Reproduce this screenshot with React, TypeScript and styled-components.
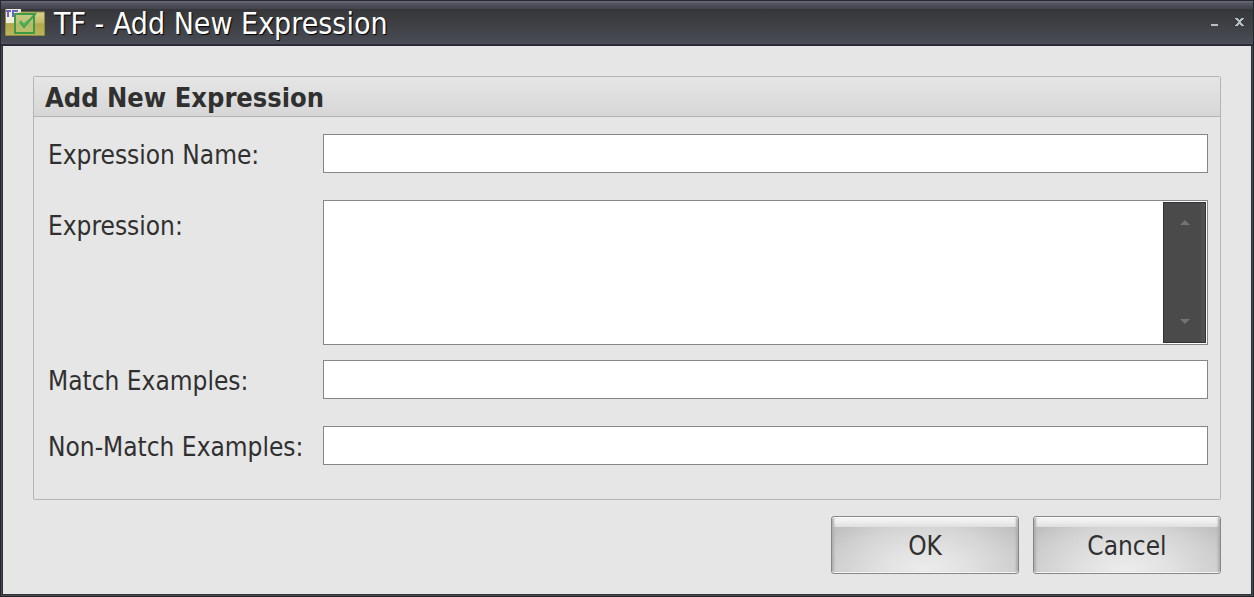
import React from "react";
import styled, { createGlobalStyle, css } from "styled-components";

const GlobalStyle = createGlobalStyle`
  *, *::before, *::after { box-sizing: border-box; }
  body {
    margin: 0;
    background: #e6e6e6;
    color: #303030;
    font: 26px/32px "DejaVu Sans Condensed", "Noto Sans", sans-serif;
  }
  button, input, textarea { font: inherit; color: inherit; }
`;

const Window = styled.div`
  display: flex;
  flex-direction: column;
  min-height: 100vh;
  border: 1px solid #24282d;
`;

const TitleBar = styled.header`
  display: flex;
  align-items: center;
  height: 45px;
  padding: 0 1px 0 4px;
  color: #fff;
  border-bottom: 2px solid #2b2b35;
  background: linear-gradient(#6b6c78 0, #50515d 3px, #42434d 8px, #36373a 8px, #3e4045 24px, #4a4c56 42px, #565867 43px);
`;

const AppIcon = styled.svg`
  display: block;
  flex: none;
`;

const Title = styled.h1`
  flex: 1;
  margin: 0 0 0 9px;
  padding-top: 2px;
  font-size: 30px;
  line-height: 40px;
  font-weight: 400;
  text-shadow: 1px 1px 1px #000;
`;

const WindowButton = styled.button`
  display: grid;
  place-items: center;
  width: 25px;
  height: 25px;
  padding: 0;
  border: 0;
  background: none;
  color: #b3c0c8;
`;

const Frame = styled.div`
  flex: 1;
  display: flex;
  flex-direction: column;
  border: solid #45484c;
  border-width: 0 1px 1px;
`;

const Content = styled.form`
  flex: 1;
  padding: 30px;
  padding-bottom: 20px;
  border: solid #303338;
  border-width: 0 1px 1px;
  background: #e6e6e6;
`;

const Group = styled.section`
  border: 1px solid #b5b5b5;
  border-radius: 2px;
`;

const GroupTitle = styled.h2`
  margin: 0;
  height: 40px;
  padding: 0 11px;
  font-size: 27px;
  line-height: 42px;
  font-weight: 700;
  border-bottom: 1px solid #b5b5b5;
  background: linear-gradient(#e6e6e6, #d6d6d6);
`;

const Fields = styled.div`
  padding: 17px 12px 34px 14px;
`;

const Row = styled.div<{ $gap?: number }>`
  display: grid;
  grid-template-columns: 275px 1fr;
  align-items: start;
  margin-bottom: ${(p) => p.$gap ?? 0}px;
`;

const Label = styled.label<{ $top?: number }>`
  padding-top: ${(p) => p.$top ?? 5}px;
  white-space: nowrap;
`;

const box = css`
  border: 1px solid #868686;
  background: #fff;
`;

const TextBox = styled.input`
  ${box}
  width: 100%;
  height: 39px;
  padding: 0 6px;
  border-radius: 0;
`;

const ScrollBox = styled.div`
  ${box}
  display: flex;
  height: 145px;
  padding: 1px;
`;

const TextArea = styled.textarea`
  flex: 1;
  min-width: 0;
  padding: 2px 6px;
  border: 0;
  resize: none;
  overflow: hidden;
  background: none;
`;

const ScrollBar = styled.div`
  display: flex;
  flex-direction: column;
  justify-content: space-between;
  width: 43px;
  border: 1px solid #323236;
  background: linear-gradient(90deg, #4a4a4a 85%, #545454);
`;

const ScrollButton = styled.button`
  display: grid;
  place-items: center;
  height: 40px;
  padding: 0;
  border: 0;
  background: none;
`;

const Actions = styled.footer`
  display: flex;
  justify-content: flex-end;
  gap: 14px;
  margin-top: 16px;
`;

const ActionButton = styled.button`
  width: 188px;
  height: 58px;
  padding: 2px 0 0;
  border: 1px solid #858585;
  border-radius: 3px;
  box-shadow: inset 0 1px #fff, inset 0 -1px #f8f8f8, inset 2px 0 2px #b0b0b0, inset -2px 0 2px #b0b0b0;
  background:
    linear-gradient(#fafafa, #dfdfdf) 0 0 / 100% 10px no-repeat,
    radial-gradient(ellipse 64% 130% at 50% 100%, #ededed 0, #e2e2e3 35%, #d4d4d5 65%, rgba(196, 196, 197, 0) 100%),
    linear-gradient(#b9b9ba, #c9c9ca);
`;

function FolderIcon() {
  return (
    <AppIcon width="40" height="27" viewBox="0 0 40 27" aria-hidden="true">
      <defs>
        <linearGradient id="folder" x2="0" y2="1">
          <stop offset="0" stopColor="#ddd698" />
          <stop offset=".5" stopColor="#c4bc66" />
          <stop offset=".55" stopColor="#b0a84a" />
          <stop offset="1" stopColor="#bdb55b" />
        </linearGradient>
      </defs>
      <path d="M.5 .5h15v2.500h24v23.500H.5z" fill="url(#folder)" stroke="#8f8a45" />
      <path d="M1 0h15v3h-2l-5 2v9H1z" fill="#f3f2ea" opacity=".9" />
      <path d="M1 2h5M3 2v6M8 8V2h5M8 5h4" fill="none" stroke="#6a65c0" strokeWidth="2" />
      <rect x="10" y="5" width="19" height="19" fill="#b7c67c" fillOpacity=".6" stroke="#3f9a45" strokeWidth="2" />
      <path d="M15 13l4 5L31 4" fill="none" stroke="#3f9f4c" strokeWidth="2" />
      <path d="M15 12l4 4 5-5" fill="none" stroke="#4fae58" strokeWidth="2" />
    </AppIcon>
  );
}

function Arrow({ down }: { down?: boolean }) {
  return (
    <svg width="10" height="6" viewBox="0 0 10 6" aria-hidden="true">
      <path d={down ? "M0 0h10L5 5z" : "M0 5h10L5 0z"} fill="#737373" />
    </svg>
  );
}

export default function App() {
  return (
    <>
      <GlobalStyle />
      <Window>
        <TitleBar>
          <FolderIcon />
          <Title>TF - Add New Expression</Title>
          <WindowButton type="button" aria-label="Minimize">
            <svg width="7" height="9" viewBox="0 0 7 9" aria-hidden="true">
              <path d="M0 6h7v2H0z" fill="currentColor" />
            </svg>
          </WindowButton>
          <WindowButton type="button" aria-label="Close">
            <svg width="9" height="9" viewBox="0 0 9 9" aria-hidden="true">
              <path d="M0 0h3v1h1v1h1V1h1V0h3v1H8v1H7v1H6v2h1v1h1v1h1v1H6V7H5V6H4v1H3v1H0V7h1V6h1V5h1V3H2V2H1V1H0z" fill="currentColor" />
            </svg>
          </WindowButton>
        </TitleBar>
        <Frame>
          <Content onSubmit={(e: React.FormEvent) => e.preventDefault()}>
            <Group>
              <GroupTitle>Add New Expression</GroupTitle>
              <Fields>
                <Row $gap={27}>
                  <Label htmlFor="name">Expression Name:</Label>
                  <TextBox id="name" type="text" />
                </Row>
                <Row $gap={15}>
                  <Label htmlFor="expression" $top={10}>Expression:</Label>
                  <ScrollBox>
                    <TextArea id="expression" />
                    <ScrollBar>
                      <ScrollButton type="button" aria-label="Scroll up"><Arrow /></ScrollButton>
                      <ScrollButton type="button" aria-label="Scroll down"><Arrow down /></ScrollButton>
                    </ScrollBar>
                  </ScrollBox>
                </Row>
                <Row $gap={27}>
                  <Label htmlFor="match">Match Examples:</Label>
                  <TextBox id="match" type="text" />
                </Row>
                <Row>
                  <Label htmlFor="non-match">Non-Match Examples:</Label>
                  <TextBox id="non-match" type="text" />
                </Row>
              </Fields>
            </Group>
            <Actions>
              <ActionButton type="submit">OK</ActionButton>
              <ActionButton type="button">Cancel</ActionButton>
            </Actions>
          </Content>
        </Frame>
      </Window>
    </>
  );
}
